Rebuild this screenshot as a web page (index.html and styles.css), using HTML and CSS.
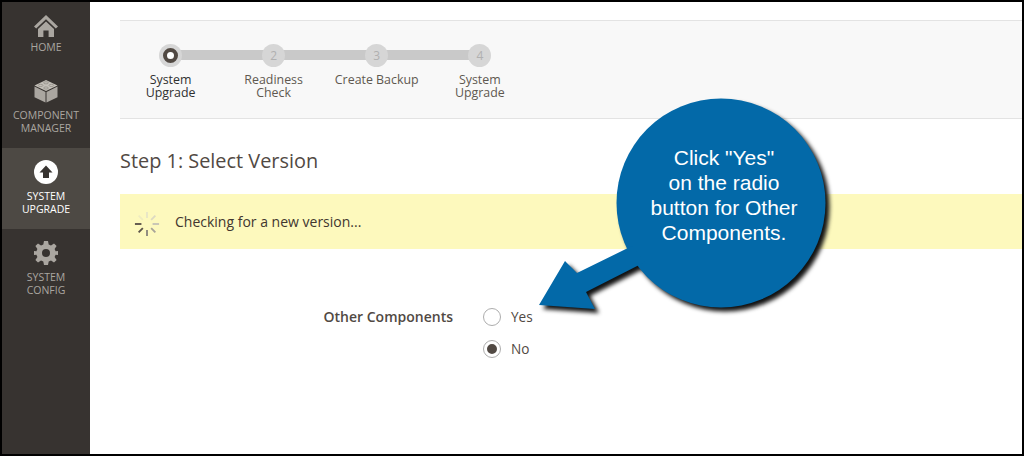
FILE: index.html
```html
<!DOCTYPE html>
<html lang="en">
<head>
  <meta charset="UTF-8">
  <meta name="viewport" content="width=device-width, initial-scale=1">
  <title>System Upgrade</title>
  <link rel="stylesheet" href="styles.css">
</head>
<body>
  <div class="frame">

    <nav class="sidebar">
      <a class="nav-item nav-home">
        <svg class="nav-icon" viewBox="0 0 24 24"><path d="M12 1 L24 12.500 L21.800 14.600 L12 5.200 L2.200 14.600 L0 12.500 Z M4 15 L12 7.400 L20 15 L20 23 L14.600 23 L14.600 16.500 L9.400 16.500 L9.400 23 L4 23 Z"/></svg>
        <span>Home</span>
      </a>
      <a class="nav-item">
        <svg class="nav-icon" viewBox="0 0 24 24"><path class="brick-top" d="M12 1 L23.500 6.500 L12 12 L0.500 6.500 Z"/><path d="M0.500 7.600 L11.500 12.900 L11.500 23.500 L0.500 18.300 Z M23.500 7.600 L12.500 12.900 L12.500 23.500 L23.500 18.300 Z"/><ellipse cx="12" cy="3.800" rx="2.400" ry="1.100" class="stud"/><ellipse cx="6.600" cy="6.400" rx="2.400" ry="1.100" class="stud"/><ellipse cx="17.400" cy="6.400" rx="2.400" ry="1.100" class="stud"/><ellipse cx="12" cy="9" rx="2.400" ry="1.100" class="stud"/></svg>
        <span>Component<br>Manager</span>
      </a>
      <a class="nav-item active">
        <svg class="nav-icon" viewBox="0 0 24 24"><circle cx="12" cy="12" r="12"/><path class="arrow-up" d="M12 5.500 L18.500 12.500 L15 12.500 L15 18 L9 18 L9 12.500 L5.500 12.500 Z"/></svg>
        <span>System<br>Upgrade</span>
      </a>
      <a class="nav-item">
        <svg class="nav-icon" viewBox="0 0 24 24"><path fill-rule="evenodd" d="M10 0 H14 L14.700 3.400 L17 4.400 L20 2.400 L22.600 5 L20.600 8 L21.600 10.300 L24 10 V14 L21.600 13.700 L20.600 16 L22.600 19 L20 21.600 L17 19.600 L14.700 20.600 L14 24 H10 L9.300 20.600 L7 19.600 L4 21.600 L1.400 19 L3.400 16 L2.400 13.700 L0 14 V10 L2.400 10.300 L3.400 8 L1.400 5 L4 2.400 L7 4.400 L9.300 3.400 Z M12 8 A4 4 0 1 0 12 16 A4 4 0 1 0 12 8 Z"/></svg>
        <span>System<br>Config</span>
      </a>
    </nav>

    <main class="content">
      <div class="steps">
        <div class="step current">
          <div class="dot"><i></i></div>
          <div class="step-label">System<br>Upgrade</div>
        </div>
        <div class="step">
          <div class="dot">2</div>
          <div class="step-label">Readiness<br>Check</div>
        </div>
        <div class="step">
          <div class="dot">3</div>
          <div class="step-label">Create Backup</div>
        </div>
        <div class="step last">
          <div class="dot">4</div>
          <div class="step-label">System<br>Upgrade</div>
        </div>
      </div>

      <h1>Step 1: Select Version</h1>

      <div class="notice">
        <svg class="spinner" viewBox="0 0 28 28">
          <line x1="1" y1="14" x2="8" y2="14" stroke="#5a5249"/>
          <line x1="5" y1="23" x2="9.500" y2="18.500" stroke="#5a5249"/>
          <line x1="14" y1="27" x2="14" y2="20.500" stroke="#8a857c"/>
          <line x1="23" y1="23" x2="18.500" y2="18.500" stroke="#a8a498"/>
          <line x1="27" y1="14" x2="20" y2="14" stroke="#c6c3b5"/>
          <line x1="23" y1="5" x2="18.500" y2="9.500" stroke="#dcd9c2"/>
          <line x1="14" y1="1" x2="14" y2="7.500" stroke="#e8e5c6"/>
          <line x1="5" y1="5" x2="9.500" y2="9.500" stroke="#efecc0"/>
        </svg>
        <span>Checking for a new version...</span>
      </div>

      <div class="field">
        <div class="field-label">Other Components</div>
        <div class="radios">
          <label class="radio"><i class="circle"></i>Yes</label>
          <label class="radio checked"><i class="circle"></i>No</label>
        </div>
      </div>
    </main>

    <!-- callout pasted over the screenshot -->
    <svg class="callout" viewBox="0 0 320 240">
      <g class="bubble">
        <circle cx="201" cy="113" r="104.500"/>
        <path d="M19 215 L45 171 L57 183 L112 156 L125 172 L66 202 L75 219 Z"/>
      </g>
      <text text-anchor="middle" x="204" y="75">Click "Yes"</text>
      <text text-anchor="middle" x="204" y="100">on the radio</text>
      <text text-anchor="middle" x="204" y="125">button for Other</text>
      <text text-anchor="middle" x="204" y="150">Components.</text>
    </svg>

  </div>
</body>
</html>
```

FILE: styles.css
```css
* {
  box-sizing: border-box;
}
body {
  margin: 0;
  font-family: 'Open Sans', sans-serif;
  color: #41362f;
}
.frame {
  position: relative;
  display: flex;
  width: 1024px;
  height: 456px;
  border: 2px solid #000;
  background: #fff;
  overflow: hidden;
}

/* sidebar */
.sidebar {
  width: 88px;
  flex-shrink: 0;
  background: #373330;
}
.nav-item {
  display: flex;
  flex-direction: column;
  align-items: center;
  height: 81px;
  padding-top: 12px;
  color: #aaa6a0;
  font-size: 10.5px;
  line-height: 13px;
  text-align: center;
  text-transform: uppercase;
}
.nav-home {
  height: 65px;
}
.nav-home .nav-icon {
  margin-bottom: 3px;
}
.nav-icon {
  width: 24px;
  height: 24px;
  margin-bottom: 6px;
  fill: #aaa6a0;
}
.brick-top {
  fill: #c4c0b9;
}
.stud {
  fill: #c4c0b9;
  stroke: #77726b;
  stroke-width: 0.5;
}
.nav-item.active {
  background: #4d4944;
  color: #fff;
}
.nav-item.active .nav-icon {
  fill: #fff;
}
.nav-item.active .arrow-up {
  fill: #373330;
}

/* steps */
.content {
  flex: 1;
  padding: 18px 0 0 30px;
}
.steps {
  display: flex;
  height: 99px;
  padding-top: 23px;
  background: #f8f8f8;
  border-top: 1px solid #e3e3e3;
  border-bottom: 1px solid #e3e3e3;
}
.step {
  position: relative;
  width: 103.1px;
  display: flex;
  flex-direction: column;
  align-items: center;
}
.step:first-child {
  margin-left: -1px;
}
.step::before {
  content: '';
  position: absolute;
  left: 50%;
  top: 6px;
  width: 100%;
  height: 10px;
  background: #c9c9c9;
}
.step.last::before {
  display: none;
}
.dot {
  position: relative;
  width: 23px;
  height: 23px;
  border-radius: 50%;
  background: #d6d6d6;
  color: #b0b0b0;
  font-size: 12px;
  line-height: 23px;
  text-align: center;
}
.dot i {
  position: absolute;
  left: 4px;
  top: 4px;
  width: 15px;
  height: 15px;
  border: 4px solid #514943;
  border-radius: 50%;
  background: #fff;
}
.step-label {
  margin-top: 6px;
  font-size: 12.4px;
  line-height: 13px;
  text-align: center;
  color: #5f5850;
}
.step.current .step-label {
  color: #303030;
}

h1 {
  margin: 28px 0 19px;
  font-size: 19.9px;
  font-weight: 400;
  line-height: 28px;
  color: #514943;
}

.notice {
  display: flex;
  align-items: center;
  height: 55px;
  padding-left: 14px;
  background: #fdf9bd;
  font-size: 14px;
}
.spinner {
  width: 26px;
  height: 26px;
  margin: 4px 15px 0 0;
  stroke-width: 2;
}

/* form */
.field {
  display: flex;
  margin-top: 59px;
  font-size: 14px;
  line-height: 18px;
}
.field-label {
  width: 333px;
  text-align: right;
  font-weight: 600;
  color: #514943;
}
.radios {
  margin-left: 30px;
}
.radio {
  display: flex;
  align-items: center;
  height: 18px;
  margin-bottom: 14px;
  font-size: 13.6px;
  color: #514943;
}
.circle {
  width: 18px;
  height: 18px;
  margin-right: 10px;
  border: 1px solid #adadad;
  border-radius: 50%;
  background: #fff;
}
.radio.checked .circle {
  border: 4px solid #fff;
  outline: 1px solid #adadad;
  outline-offset: -1px;
  background: #514943;
}

/* callout */
.callout {
  position: absolute;
  left: 518px;
  top: 88px;
  width: 320px;
  height: 240px;
  overflow: visible;
}
.bubble {
  fill: #0369a8;
  filter: drop-shadow(4px 4px 2px #111);
}
.callout text {
  fill: #fff;
  font-family: 'Liberation Sans', sans-serif;
  font-size: 21px;
}
```
